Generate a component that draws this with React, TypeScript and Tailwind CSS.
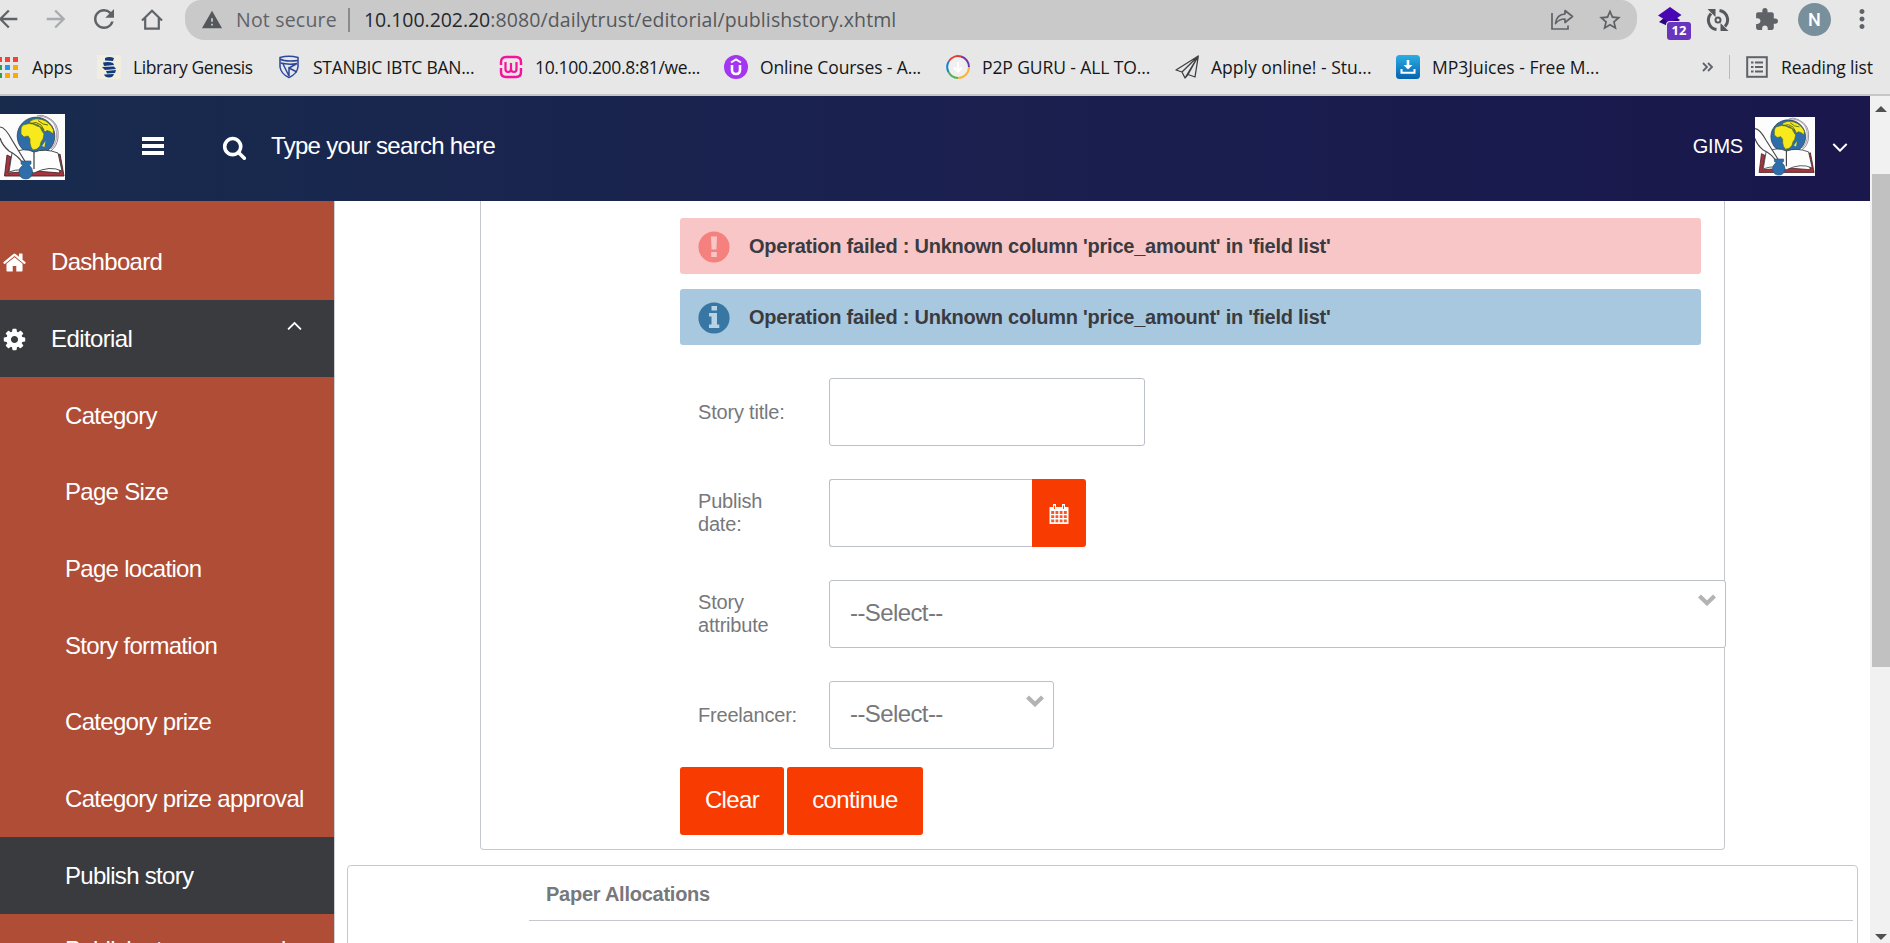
import React from "react";
import { MdArrowBack, MdArrowForward, MdRefresh, MdWarning, MdStarBorder, MdExtension, MdMoreVert } from "react-icons/md";

const FA = {
  home: "M1472 992v480q0 26-19 45t-45 19h-384v-384h-256v384h-384q-26 0-45-19t-19-45v-480q0-1 .5-3t.5-3l575-474 575 474q1 2 1 6zm223-69l-62 74q-8 9-21 11h-3q-13 0-21-7l-692-577-692 577q-12 8-24 7-13-2-21-11l-62-74q-8-10-7-23.5t11-21.5l719-599q32-26 76-26t76 26l244 204v-195q0-14 9-23t23-9h192q14 0 23 9t9 23v408l219 182q10 8 11 21.5t-7 23.5z",
  cog: "M1152 896q0-106-75-181t-181-75-181 75-75 181 75 181 181 75 181-75 75-181zm512-109v222q0 12-8 23t-20 13l-185 28q-19 54-39 91 35 50 107 138 10 12 10 25t-9 23q-27 37-99 108t-94 71q-12 0-26-9l-138-108q-44 23-91 38-16 136-29 186-7 28-36 28h-222q-14 0-24.5-8.5t-11.5-21.5l-28-184q-49-16-90-37l-141 107q-10 9-25 9-14 0-25-11-126-114-165-168-7-10-7-23 0-12 8-23 15-21 51-66.5t54-70.5q-27-50-41-99l-183-27q-13-2-21-12.5t-8-23.5v-222q0-12 8-23t19-13l186-28q14-46 39-92-40-57-107-138-10-12-10-24 0-10 9-23 26-36 98.5-107.5t94.5-71.5q13 0 26 10l138 107q44-23 91-38 16-136 29-186 7-28 36-28h222q14 0 24.5 8.5t11.5 21.5l28 184q49 16 90 37l142-107q9-9 24-9 13 0 25 10 129 119 165 170 7 8 7 22 0 12-8 23-15 21-51 66.5t-54 70.5q26 50 41 98l183 28q13 2 21 12.5t8 23.5z",
  search: "M1216 832q0-185-131.5-316.5t-316.5-131.5-316.5 131.5-131.5 316.5 131.5 316.5 316.5 131.5 316.5-131.5 131.5-316.5zm512 832q0 52-38 90t-90 38q-54 0-90-38l-343-342q-179 124-399 124-143 0-273.5-55.5t-225-150-150-225-55.5-273.5 55.5-273.5 150-225 225-150 273.5-55.5 273.5 55.5 225 150 150 225 55.5 273.5q0 220-124 399l343 343q37 37 37 90z",
  angleDown: "M1395 736q0 13-10 23l-466 466q-10 10-23 10t-23-10l-466-466q-10-10-10-23t10-23l50-50q10-10 23-10t23 10l393 393 393-393q10-10 23-10t23 10l50 50q10 10 10 23z",
};

function Fa({ d, className }: { d: string; className: string }) {
  return (
    <svg viewBox="0 0 1792 1792" fill="currentColor" className={className}>
      <path d={d} />
    </svg>
  );
}

function Logo({ className }: { className: string }) {
  return (
    <svg viewBox="0 0 65 66" preserveAspectRatio="none" className={className}>
      <rect width="65" height="66" fill="#fdfdfd" />
      <path d="M37 2 Q41 0 47 3 Q60 9 58 24 Q57 32 51 37" fill="none" stroke="#8d8494" strokeWidth="1" />
      <path d="M39 2 Q58 4 56.500 23 Q56 30 51 35" fill="none" stroke="#b7a9b4" strokeWidth="1.200" />
      <circle cx="36" cy="22" r="18.800" fill="#2d6da9" stroke="#2b3d4d" strokeWidth="0.800" />
      <path d="M21 16 Q21 11 25 10.500 L29 9.500 L33 10 L37 12 L40 13 L42 17 L44 20 L43 25 L41 28 L40 32 L37 35 L33 36 L31 33 L30 29 L30 25 L28 22 L24 23 L21 20 Z" fill="#f7e91c" stroke="#5d6d20" strokeWidth="0.700" />
      <path d="M30 7 Q35 3.500 42 5.500 Q50 8 53.500 16 L53 20 L50 17.500 L47 16.500 L45 18 L42 14 L38 11 L33 9.500 L30 9 Z" fill="#f7e91c" stroke="#55631d" strokeWidth="0.700" />
      <path d="M31 9.500 L36 8.500 L41 11 L44 16 M38 6.500 L43 10 L48 11" fill="none" stroke="#3d4a1c" strokeWidth="0.800" />
      <path d="M42 32 L45.500 27 L44.500 33 Z" fill="#f7e91c" />
      <path d="M7 41 L4.500 62 L64 62 L60 40 L56 42 L60 59 L36 57 L8 59 L11 43 Z" fill="#a8343d" stroke="#4b2429" strokeWidth="0.900" />
      <path d="M12 39 Q24 33 34 38 Q45 34 58 39 L62 57 Q50 51 34 59 Q22 53 9 58 Z" fill="#fefefe" stroke="#3b3b3f" strokeWidth="0.900" />
      <path d="M34 38 V55" stroke="#3b3b3f" strokeWidth="1.200" />
      <path d="M0 13 Q5 13 12 26 L26 49 Q17 41 9 37 Q2 31 0 24" fill="#fdfdfd" />
      <path d="M0 13 Q5 13 12 26 L26 49 M0 24 Q2 31 9 37 Q19 42 24 51" fill="none" stroke="#48484b" strokeWidth="1.200" />
      <path d="M21 47 H31 V50 L29 51 Q33 54 32.500 59 Q31 65 26 65 Q20 65 19 59 Q18.500 54 23 51 L21 50 Z" fill="#2e6fab" stroke="#254d77" strokeWidth="0.600" />
    </svg>
  );
}

const bookmarks = [
  {
    text: "Library Genesis", box: "w-[180px]", track: "tracking-[-0.4px]",
    icon: (
      <svg viewBox="0 0 24 24" className="size-6">
        <rect width="24" height="24" fill="#efeee0" />
        <path d="M8 3 Q12 1 17 3 L16 6 L8 5.500 Z M6 7.500 Q12 6.500 16 8 L17 10 L7 11 Z M5 12 L17 11.500 L19 14 L8 15 Z M9 16 L19 15 L18 18 L10 18.500 Z M7 19.500 L17 19 Q16 22.500 12 22.500 Q8 22.500 7 19.500 Z" fill="#123a7c" />
      </svg>
    ),
  },
  {
    text: "STANBIC IBTC BAN...", box: "w-[222px]", track: "tracking-[-0.25px]",
    icon: (
      <svg viewBox="0 0 24 24" fill="none" stroke="#2c479b" strokeWidth="1.500" className="size-6">
        <path d="M3 2.500 Q12 0 21 2.500 V12 Q20 19 12 22.500 Q4 19 3 12 Z" />
        <path d="M3 4 Q8 7 21 5.500 M3.500 8 Q12 10 20 8.500 M6 9 L12 21 M12 21 V13 L20 17 M12 13 L20 8.500" />
      </svg>
    ),
  },
  {
    text: "10.100.200.8:81/we...", box: "w-[225px]", track: "tracking-[-0.33px]",
    icon: (
      <svg viewBox="0 0 24 24" fill="none" stroke="#f7129b" className="size-6">
        <path d="M2 10 V7 Q2 2 7 2 H17 Q22 2 22 7 V10 M2 13 V17 Q2 22 7 22 H17 Q22 22 22 17 V13" strokeWidth="2.400" />
        <path d="M6.500 7 V14 Q6.500 17 9 17 Q12 17 12 14 V8 M12 14 Q12 17 15 17 Q17.500 17 17.500 14 V7" strokeWidth="2.200" />
      </svg>
    ),
  },
  {
    text: "Online Courses - A...", box: "w-[222px]", track: "tracking-[-0.13px]",
    icon: (
      <svg viewBox="0 0 24 24" fill="none" stroke="#fff" className="size-6">
        <circle cx="12" cy="12" r="12" fill="#a435f0" stroke="none" />
        <path d="M7 7.500 L12 4.500 L17 7.500" strokeWidth="2" />
        <path d="M8 10 V15 Q8 19 12 19 Q16 19 16 15 V10" strokeWidth="2.600" />
      </svg>
    ),
  },
  {
    text: "P2P GURU - ALL TO...", box: "w-[229px]", track: "tracking-[-0.1px]",
    icon: (
      <svg viewBox="0 0 24 24" fill="none" strokeWidth="2" className="size-6">
        <circle cx="12" cy="12" r="10.500" fill="#f0f0f0" />
        <path d="M3 6 A11 11 0 0 1 15 1.500" stroke="#e23b35" />
        <path d="M15 1.500 A11 11 0 0 1 23 12" stroke="#6f3ba2" />
        <path d="M23 12 A11 11 0 0 1 12 23" stroke="#f4b545" />
        <path d="M12 23 A11 11 0 0 1 2.500 17" stroke="#49b65a" />
        <path d="M2.500 17 A11 11 0 0 1 3 6" stroke="#1584cd" />
        <path d="M12 7 V16 M8 12.500 L12 16.500 L16 12.500" stroke="#fff" />
      </svg>
    ),
  },
  {
    text: "Apply online! - Stu...", box: "w-[221px]", track: "tracking-[0px]",
    icon: (
      <svg viewBox="0 0 24 24" fill="none" stroke="#3e4043" strokeWidth="1.300" strokeLinejoin="round" className="size-6">
        <path d="M23.300 1 L1 15 L7 17 L10 23 L13 19.500 L20 22 Z M23.300 1 L7 17 M23.300 1 L10 23 M23.300 1 L13 19.500" />
      </svg>
    ),
  },
  {
    text: "MP3Juices - Free M...", box: "w-[290px]", track: "tracking-[0px]",
    icon: (
      <svg viewBox="0 0 24 24" className="size-6">
        <defs>
          <linearGradient id="dl" x1="0" y1="0" x2="0" y2="1">
            <stop offset="0" stopColor="#2aaee4" />
            <stop offset="1" stopColor="#0562ae" />
          </linearGradient>
        </defs>
        <rect width="24" height="24" rx="3.500" fill="url(#dl)" />
        <path d="M10.700 5 H13.300 V10 H16.500 L12 14.500 L7.500 10 H10.700 Z M4.500 14 H6.500 V16.700 H17.500 V14 H19.500 V18.800 H4.500 Z" fill="#fff" />
      </svg>
    ),
  },
];

const appDots = ["bg-[#f44336]", "bg-[#f44336]", "bg-[#f44336]", "bg-[#2ba14b]", "bg-[#2196f3]", "bg-[#fbab00]", "bg-[#2ba14b]", "bg-[#fbab00]", "bg-[#fbab00]"];

function Browser() {
  return (
    <div className="h-24 shrink-0 border-b-2 border-[#c6c7c9] bg-[#e7e7e7] font-['Open_Sans',sans-serif] text-[#5f6368]">
      <div className="flex h-10 items-center">
        <MdArrowBack className="-ml-[6px] mb-[3px] size-[28px] shrink-0" />
        <MdArrowForward className="mb-[3px] ml-5 size-[28px] shrink-0 text-[#a9abae]" />
        <MdRefresh className="mb-[2px] ml-[19px] size-[30px] shrink-0" />
        <svg viewBox="0 0 22 22" fill="none" stroke="currentColor" strokeWidth="2.200" className="ml-[22px] mb-[1px] size-[22px] shrink-0">
          <path d="M1 11.500 L11 1.800 L21 11.500 M4.200 9 V19.700 H17.800 V9" />
        </svg>
        <div className="ml-[22px] flex h-10 w-[1452px] shrink-0 items-center rounded-b-[20px] rounded-tl-[16px] rounded-tr-[16px] bg-[#c9c9c9] pl-4 pb-[1px]">
          <MdWarning className="size-[22px] text-[#54585c]" />
          <span className="ml-[13px] w-[112px] whitespace-nowrap text-[19.5px] tracking-[0.2px]">Not secure</span>
          <span className="h-6 w-[2px] bg-[#8a8c8e]" />
          <span className="ml-[14px] w-[1187px] whitespace-nowrap text-[19.5px] tracking-[0.1px] text-[#55585c]">
            <span className="tracking-[-0.05px] text-[#26282b]">10.100.202.20</span>:8080/dailytrust/editorial/publishstory.xhtml
          </span>
          <svg viewBox="0 0 24 24" fill="none" stroke="currentColor" strokeWidth="1.700" className="-ml-[1px] size-6 shrink-0">
            <path d="M2 5 V21 H18 V17.500" />
            <path d="M15 2.500 L22.500 8.500 L15 14.500 V11 Q9 11 5.500 15.500 Q6.500 6.500 15 6 Z" strokeLinejoin="round" />
          </svg>
          <MdStarBorder className="ml-[23px] size-[26px] shrink-0" />
        </div>
        <div className="relative ml-[21px] h-10 w-[36px] shrink-0">
          <svg viewBox="0 0 24 24" className="mt-[6px] size-6">
            <path d="M1 16 L12 7 L22 14 L12 21 Z" fill="#2b057e" />
            <path d="M12 1 L23.500 9 L12 17 L0 9.500 Z" fill="#4a08b4" />
          </svg>
          <span className="absolute left-[9px] top-[22px] flex h-[18px] w-6 items-center justify-center rounded-[3px] bg-[#6a35bd] text-[13px] font-bold text-white shadow-[0_0_0_1px_#e7e7e7]">12</span>
        </div>
        <svg viewBox="0 0 24 24" fill="none" stroke="#55585c" strokeWidth="3" className="ml-[12px] mb-[1px] size-6 shrink-0">
          <path d="M10.500 21.500 A9.600 9.600 0 0 1 5 5.500" />
          <path d="M13.500 2.500 A9.600 9.600 0 0 1 19 18.500" />
          <path d="M1.500 1 H9.500 V9 Z M22.500 23 H14.500 V15 Z" fill="#55585c" stroke="none" />
          <circle cx="12" cy="12" r="2.500" strokeWidth="2" />
        </svg>
        <MdExtension className="ml-[24px] mb-[1px] size-[25px] shrink-0" />
        <span className="mb-[1px] ml-[19px] flex size-[33px] shrink-0 items-center justify-center rounded-full bg-[#78909c] font-[Roboto,sans-serif] text-[18px] font-medium text-white">N</span>
        <MdMoreVert className="ml-[16px] mb-[2px] size-[30px] shrink-0" />
      </div>
      <div className="flex h-[54px] items-center text-[17.5px] text-[#15171a]">
        <div className="-ml-[3px] grid grid-cols-3 gap-[3px]">
          {appDots.map((c, i) => (
            <span key={i} className={`size-[5px] ${c}`} />
          ))}
        </div>
        <span className="ml-[14px] w-[65px] shrink-0 tracking-[-0.1px]">Apps</span>
        {bookmarks.map((b) => (
          <div key={b.text} className={`flex shrink-0 items-center gap-3 whitespace-nowrap ${b.box}`}>
            <span className="shrink-0">{b.icon}</span>
            <span className={b.track}>{b.text}</span>
          </div>
        ))}
        <svg viewBox="0 0 12 10" fill="none" stroke="#5f6368" strokeWidth="1.800" className="ml-4 h-[10px] w-3 shrink-0">
          <path d="M1 1 L5 5 L1 9 M6 1 L10 5 L6 9" />
        </svg>
        <span className="ml-[15px] h-6 w-px shrink-0 bg-[#b7b9bb]" />
        <svg viewBox="0 0 22 22" fill="none" stroke="#5f6368" strokeWidth="2" className="ml-4 size-[22px] shrink-0">
          <rect x="1.200" y="1.200" width="19.600" height="19.600" />
          <path d="M5 6.500 H7.500 M9 6.500 H17 M5 11 H7.500 M9 11 H17 M5 15.500 H7.500 M9 15.500 H17" />
        </svg>
        <span className="ml-[13px] whitespace-nowrap tracking-[-0.15px]">Reading list</span>
      </div>
    </div>
  );
}

function Header() {
  return (
    <header className="flex h-[105px] shrink-0 items-center bg-linear-to-r from-[#182b4d] via-[#1a204f] via-50% to-[#19174c] text-white">
      <Logo className="mb-[3px] h-[66px] w-[65px] shrink-0" />
      <div className="mb-[5px] ml-[77px] flex w-[22px] flex-col gap-[3.500px]">
        <span className="h-[3.500px] bg-white" />
        <span className="h-[3.500px] bg-white" />
        <span className="h-[3.500px] bg-white" />
      </div>
      <Fa d={FA.search} className="mb-[3px] ml-[58px] size-[25px] shrink-0" />
      <span className="mb-[6px] ml-6 flex-1 text-[24px] leading-7 tracking-[-0.7px]">Type your search here</span>
      <span className="mb-[5px] text-[20px] tracking-[-0.200px]">GIMS</span>
      <Logo className="mb-[4px] ml-[12px] h-[59px] w-[60px] shrink-0" />
      <Fa d={FA.angleDown} className="mb-[4px] ml-[12px] mr-[17px] size-[26px] shrink-0" />
    </header>
  );
}

const submenu = [
  { label: "Category", row: "pt-[1px]" },
  { label: "Page Size", row: "" },
  { label: "Page location", row: "" },
  { label: "Story formation", row: "pt-[1px]" },
  { label: "Category prize", row: "" },
  { label: "Category prize approval", row: "" },
  { label: "Publish story", row: "bg-[#3a3b3f] pt-[1px]" },
  { label: "Publish story approval", row: "pb-[3px]" },
];

function Sidebar() {
  return (
    <nav className="h-[742px] w-[334px] shrink-0 overflow-hidden bg-[#af4d37] pt-[22px] text-[24px] tracking-[-0.7px] text-white">
      <div className="flex h-[77px] items-center">
        <Fa d={FA.home} className="ml-[2px] mt-[2px] size-[25px]" />
        <span className="ml-6">Dashboard</span>
      </div>
      <div className="flex h-[77px] items-center bg-[#3a3b3f]">
        <Fa d={FA.cog} className="ml-[2px] mt-[2px] size-[25px]" />
        <span className="ml-6 flex-1 tracking-[-0.6px]">Editorial</span>
        <Fa d={FA.angleDown} className="mb-[25px] mr-[27px] size-[25px] rotate-180" />
      </div>
      {submenu.map((s) => (
        <div key={s.label} className={`flex h-[76.670px] items-center whitespace-nowrap pl-[65px] ${s.row}`}>
          {s.label}
        </div>
      ))}
    </nav>
  );
}

function Alert({ kind }: { kind: "error" | "info" }) {
  const error = kind === "error";
  return (
    <div className={`flex h-14 w-[1021px] items-center rounded-[3px] pl-[18px] ${error ? "bg-[#f9c6c8]" : "bg-[#a8c8df]"}`}>
      <svg viewBox="0 0 32 32" className="mt-[2px] size-8 shrink-0">
        <circle cx="16" cy="16" r="15.600" fill={error ? "#f5817f" : "#3876a3"} />
        {error ? (
          <path d="M13 5.500 H19 L18.400 18.500 H13.600 Z M13.200 21 H18.800 V26 H13.200 Z" fill="#f9c6c8" />
        ) : (
          <path d="M13.500 4 H19 V8.500 H13.500 Z M11 11 H19 V22.500 H21.300 V26 H11 V22.500 H13.500 V14.500 H11 Z" fill="#b9d3e5" />
        )}
      </svg>
      <span className="ml-[19px] whitespace-nowrap text-[20px] font-bold leading-6 tracking-[-0.24px] text-[#3a3b40]">
        Operation failed : Unknown column 'price_amount' in 'field list'
      </span>
    </div>
  );
}

function Chevron() {
  return (
    <svg viewBox="0 0 18 12" fill="none" stroke="#b3b3b3" strokeWidth="4.200" className="mt-[13px] h-3 w-[18px]">
      <path d="M1.500 2 L9 9.200 L16.500 2" />
    </svg>
  );
}

function Row({ label, children }: { label: string; children: React.ReactNode }) {
  return (
    <div className="flex h-[68px] items-center">
      <div className="mr-[31px] w-[100px] shrink-0 text-[20px] leading-[23px] tracking-[-0.2px] text-[#77787b]">{label}</div>
      {children}
    </div>
  );
}

const field = "flex h-[68px] shrink-0 border border-[#bcc0c9] bg-white";

function Select({ width }: { width: string }) {
  return (
    <div className={`${field} ${width} justify-between rounded-[3px] pl-5 pr-[9px]`}>
      <span className="self-center pb-[3px] text-[24px] leading-7 tracking-[-0.6px] text-[#77787b]">--Select--</span>
      <Chevron />
    </div>
  );
}

function Content() {
  return (
    <main className="h-[742px] flex-1 overflow-hidden border-l border-[#cfd0d6] bg-white">
      <section className="ml-[145px] h-[649px] w-[1245px] rounded-b-[4px] border border-t-0 border-[#c5c9ce] pl-[199px] pt-[17px]">
        <Alert kind="error" />
        <div className="h-[15px]" />
        <Alert kind="info" />
        <div className="mt-[33px] flex flex-col gap-[33px] pl-[18px]">
          <Row label="Story title:">
            <div className={`${field} w-[316px] rounded-[3px]`} />
          </Row>
          <Row label="Publish date:">
            <div className={`${field} w-[203px] rounded-l-[3px] border-r-0`} />
            <div className="flex h-[68px] w-[54px] items-center justify-center rounded-r-[3px] bg-[#f83b00]">
              <svg viewBox="0 0 20 20" className="mt-[2px] size-5">
                <path d="M0.500 3 H19.500 V20 H0.500 Z" fill="#fff" />
                <path d="M4 0 H7 V5 H4 Z M13 0 H16 V5 H13 Z" fill="#fff" />
                <path d="M5.500 1.500 V5 M14.500 1.500 V5" stroke="#f83b00" strokeWidth="0.900" />
                <path d="M2.200 7 H5.200 V10 H2.200 Z M6.500 7 H9.300 V10 H6.500 Z M10.700 7 H13.500 V10 H10.700 Z M14.800 7 H17.800 V10 H14.800 Z M2.200 11.200 H5.200 V14 H2.200 Z M6.500 11.200 H9.300 V14 H6.500 Z M10.700 11.200 H13.500 V14 H10.700 Z M14.800 11.200 H17.800 V14 H14.800 Z M2.200 15.500 H5.200 V18.300 H2.200 Z M6.500 15.500 H9.300 V18.300 H6.500 Z M10.700 15.500 H13.500 V18.300 H10.700 Z M14.800 15.500 H17.800 V18.300 H14.800 Z" fill="#f83b00" fillOpacity="0.850" />
              </svg>
            </div>
          </Row>
          <Row label="Story attribute">
            <Select width="w-[897px]" />
          </Row>
          <Row label="Freelancer:">
            <Select width="w-[225px]" />
          </Row>
        </div>
        <div className="mt-[18px] flex gap-[3px] text-[24px] leading-7 tracking-[-0.65px] text-white">
          <button className="h-[68px] w-[104px] rounded-[3px] bg-[#f83b00] pb-[3px]">Clear</button>
          <button className="h-[68px] w-[136px] rounded-[3px] bg-[#f83b00] pb-[3px]">continue</button>
        </div>
      </section>
      <section className="ml-[12px] mt-[15px] h-[200px] w-[1511px] rounded-t-[4px] border border-[#c8c9cb] pl-[181px] pr-1">
        <h2 className="h-[55px] border-b border-[#c5c9ce] pl-[17px] pt-4 text-[20px] font-bold leading-6 tracking-[-0.25px] text-[#77787b]">Paper Allocations</h2>
      </section>
    </main>
  );
}

export default function App() {
  return (
    <div className="flex h-[943px] w-[1890px] flex-col overflow-hidden bg-white font-['Liberation_Sans',Arial,sans-serif]">
      <Browser />
      <div className="flex h-[847px]">
        <div className="flex w-[1870px] flex-col">
          <Header />
          <div className="flex">
            <Sidebar />
            <Content />
          </div>
        </div>
        <div className="flex w-5 flex-col items-center bg-[#f1f1f1] pl-[2px]">
          <svg viewBox="0 0 12 6" className="mb-[62px] mt-[10px] h-[6px] w-3 shrink-0">
            <path d="M0 6 L6 0 L12 6 Z" fill="#505050" />
          </svg>
          <div className="h-[493px] w-[18px] shrink-0 bg-[#c1c1c1]" />
          <svg viewBox="0 0 12 6" className="mt-[267px] h-[6px] w-3 shrink-0">
            <path d="M0 0 L6 6 L12 0 Z" fill="#505050" />
          </svg>
        </div>
      </div>
    </div>
  );
}
